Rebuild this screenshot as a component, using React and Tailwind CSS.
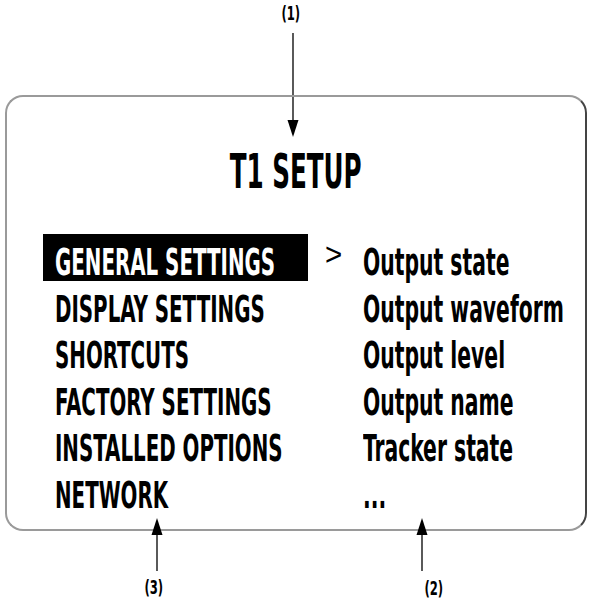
import React from 'react';

const font = "font-['DejaVu_Sans_Condensed','DejaVu_Sans',sans-serif] font-stretch-condensed";

const menu = [
  { left: 'GENERAL SETTINGS', right: 'Output state', active: true },
  { left: 'DISPLAY SETTINGS', right: 'Output waveform' },
  { left: 'SHORTCUTS', right: 'Output level' },
  { left: 'FACTORY SETTINGS', right: 'Output name' },
  { left: 'INSTALLED OPTIONS', right: 'Tracker state' },
  { left: 'NETWORK', right: '...' },
];

function Arrow({ up, length }) {
  return (
    <svg width="12" height={length} viewBox={`0 0 12 ${length}`} className="block shrink-0">
      {up ? (
        <>
          <polygon points="6,0 0.5,17 11.5,17" fill="#000" />
          <line x1="6" y1="16" x2="6" y2={length} stroke="#000" strokeWidth="1.3" />
        </>
      ) : (
        <>
          <line x1="6" y1="0" x2="6" y2={length - 16} stroke="#000" strokeWidth="1.3" />
          <polygon points={`0.5,${length - 17} 11.5,${length - 17} 6,${length}`} fill="#000" />
        </>
      )}
    </svg>
  );
}

function Label({ children, className = '' }) {
  return (
    <span className={`inline-block whitespace-nowrap text-[19px] font-bold leading-none text-black scale-x-[0.68] ${className}`}>
      {children}
    </span>
  );
}

export default function App() {
  return (
    <div className={`${font} flex flex-col w-[593px] h-[605px] bg-white text-black overflow-hidden`}>
      {/* callout (1) */}
      <div className="ml-[287px] w-[12px] pt-[4px] flex flex-col items-center gap-[10px]">
        <Label className="mr-[5px]">(1)</Label>
        <Arrow length={104} />
      </div>

      {/* screen */}
      <div className="-mt-[42px] ml-[5px] w-[582px] h-[436px] shrink-0 rounded-[18px] border-2 border-[#9a9a9a] border-r-[#444]">
        <div className="pt-[50px] text-center text-[48px] font-bold leading-none">
          <span className="inline-block scale-x-[0.57]">T1 SETUP</span>
        </div>
        <div className="mt-[39px] pl-[36px] flex flex-col">
          {menu.map((m) => (
            <div key={m.left} className="flex h-[46.6px]">
              <div className={`w-[265px] shrink-0 pl-[12px] ${m.active ? 'bg-black text-white' : ''}`}>
                <div className="pt-[5px] text-[38px] font-bold leading-[46.6px] whitespace-nowrap">
                  <span className="inline-block origin-left scale-x-[0.58]">{m.left}</span>
                </div>
              </div>
              <div className="w-[55px] shrink-0 pl-[17px]">
                {m.active && (
                  <div className="pt-[5px] font-['Liberation_Sans',sans-serif] text-[31px] leading-none scale-x-[0.95] origin-left">&gt;</div>
                )}
              </div>
              <div className="shrink-0 pt-[5px] text-[38px] font-bold leading-[46.6px] whitespace-nowrap">
                <span className="inline-block origin-left scale-x-[0.595]">{m.right}</span>
              </div>
            </div>
          ))}
        </div>
      </div>

      {/* callouts (3) and (2) */}
      <div className="-mt-[13px] flex items-start">
        <div className="ml-[151px] w-[12px] flex flex-col items-center gap-[7px]">
          <Arrow up length={53} />
          <Label className="mr-[6px]">(3)</Label>
        </div>
        <div className="ml-[253px] w-[12px] flex flex-col items-center gap-[8px]">
          <Arrow up length={53} />
          <Label className="ml-[24px]">(2)</Label>
        </div>
      </div>
    </div>
  );
}
